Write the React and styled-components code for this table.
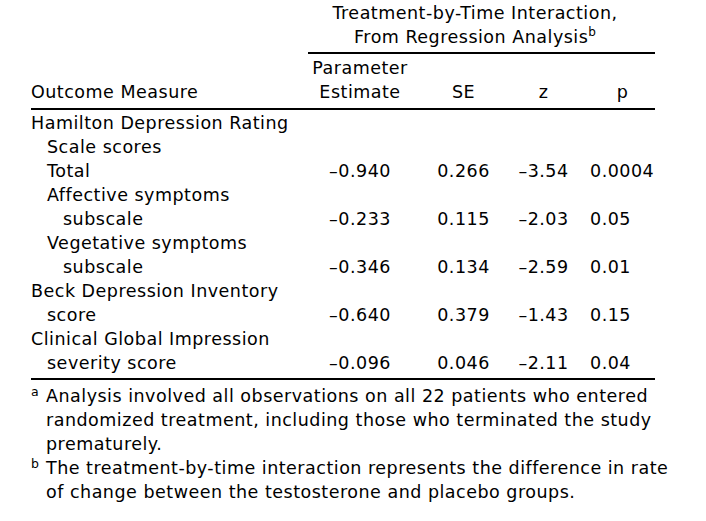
import React from "react";
import styled, { createGlobalStyle } from "styled-components";

const GlobalStyle = createGlobalStyle`
  html, body { margin: 0; padding: 0; background: #ffffff; }
  body {
    font-family: "DejaVu Sans", "Liberation Sans", sans-serif;
    font-size: 17.5px;
    line-height: 24px;
    letter-spacing: 0.5px;
    color: #000000;
  }
`;

const Page = styled.div`
  width: 706px;
  height: 521px;
  padding-left: 31px;
  box-sizing: border-box;
`;

const Table = styled.div`
  width: 624px;
  display: grid;
  grid-template-columns: 279px 100px 107px 53px 85px;
`;

const SpannerTitle = styled.div`
  grid-column: 2 / 6;
  text-align: center;
  padding: 1px 13px 3px 0;
  border-bottom: 2px solid #000;
  margin-left: -2px;
  white-space: nowrap;
`;

const Sup = styled.sup`
  font-size: 12px;
  line-height: 0;
  vertical-align: 0;
  position: relative;
  top: -7px;
  letter-spacing: 0;
`;

const HeadCell = styled.div`
  padding-top: 2px;
  padding-bottom: 4px;
  border-bottom: 2px solid #000;
  display: flex;
  flex-direction: column;
  justify-content: flex-end;
  align-items: ${(p) => (p.$left ? "flex-start" : "center")};
  padding-left: ${(p) => p.$pad || 0}px;
  white-space: nowrap;
`;

const LabelCell = styled.div`
  padding-left: ${(p) => 16 + p.$indent}px;
  text-indent: -16px;
  padding-top: ${(p) => (p.$first ? 1 : 0)}px;
  padding-bottom: ${(p) => (p.$last ? 3 : 0)}px;
  border-bottom: ${(p) => (p.$last ? "2px solid #000" : "none")};
  white-space: nowrap;
`;

const ValueCell = styled.div`
  display: flex;
  align-items: flex-end;
  justify-content: ${(p) => (p.$left ? "flex-start" : "center")};
  padding-left: ${(p) => p.$pad || 0}px;
  padding-bottom: ${(p) => (p.$last ? 3 : 0)}px;
  border-bottom: ${(p) => (p.$last ? "2px solid #000" : "none")};
  white-space: nowrap;
`;

const Notes = styled.div`
  width: 624px;
  padding-top: 4px;
`;

const Note = styled.div`
  padding-left: 15px;
  text-indent: -15px;
  white-space: nowrap;
`;

const NoteMark = styled.span`
  display: inline-block;
  width: 15px;
  text-indent: 0;
  font-size: 12.5px;
  line-height: 0;
  position: relative;
  top: -6px;
  letter-spacing: 0;
`;

const rows = [
  { lines: ["Hamilton Depression Rating", "Scale scores"], indent: 0 },
  { lines: ["Total"], indent: 16, v: ["–0.940", "0.266", "–3.54", "0.0004"] },
  { lines: ["Affective symptoms", "subscale"], indent: 16, v: ["–0.233", "0.115", "–2.03", "0.05"] },
  { lines: ["Vegetative symptoms", "subscale"], indent: 16, v: ["–0.346", "0.134", "–2.59", "0.01"] },
  { lines: ["Beck Depression Inventory", "score"], indent: 0, v: ["–0.640", "0.379", "–1.43", "0.15"] },
  { lines: ["Clinical Global Impression", "severity score"], indent: 0, v: ["–0.096", "0.046", "–2.11", "0.04"] },
];

export default function App() {
  return (
    <>
      <GlobalStyle />
      <Page>
        <Table>
          <div />
          <SpannerTitle>
            Treatment-by-Time Interaction,
            <br />
            From Regression Analysis<Sup>b</Sup>
          </SpannerTitle>

          <HeadCell $left>Outcome Measure</HeadCell>
          <HeadCell>
            <span>Parameter</span>
            <span>Estimate</span>
          </HeadCell>
          <HeadCell>SE</HeadCell>
          <HeadCell>z</HeadCell>
          <HeadCell $pad={20}>p</HeadCell>

          {rows.map((r, i) => {
            const first = i === 0;
            const last = i === rows.length - 1;
            const v = r.v || ["", "", "", ""];
            return (
              <React.Fragment key={i}>
                <LabelCell $indent={r.indent} $first={first} $last={last}>
                  {r.lines.map((l, j) => (
                    <React.Fragment key={j}>
                      {j > 0 && <br />}
                      {l}
                    </React.Fragment>
                  ))}
                </LabelCell>
                <ValueCell $last={last}>{v[0]}</ValueCell>
                <ValueCell $last={last}>{v[1]}</ValueCell>
                <ValueCell $last={last}>{v[2]}</ValueCell>
                <ValueCell $last={last} $left $pad={20}>
                  {v[3]}
                </ValueCell>
              </React.Fragment>
            );
          })}
        </Table>
        <Notes>
          <Note>
            <NoteMark>a</NoteMark>Analysis involved all observations on all 22 patients who entered
            <br />
            randomized treatment, including those who terminated the study
            <br />
            prematurely.
          </Note>
          <Note>
            <NoteMark>b</NoteMark>The treatment-by-time interaction represents the difference in rate
            <br />
            of change between the testosterone and placebo groups.
          </Note>
        </Notes>
      </Page>
    </>
  );
}
